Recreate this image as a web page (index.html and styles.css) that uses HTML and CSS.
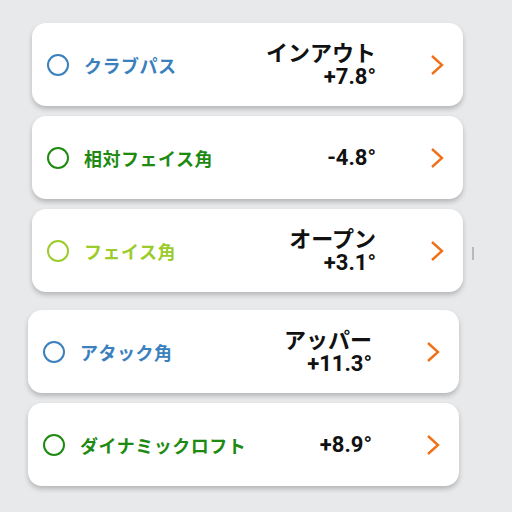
FILE: index.html
```html
<!DOCTYPE html>
<html lang="ja">
<head>
  <meta charset="UTF-8">
  <meta name="viewport" content="width=device-width, initial-scale=1.0">
  <title>スイング解析</title>
  <link rel="stylesheet" href="styles.css">
</head>
<body>

  <div class="group group-top">
    <div class="card">
      <span class="dot blue"></span>
      <span class="label blue">クラブパス</span>
      <div class="value">
        <div>インアウト</div>
        <div>+7.8°</div>
      </div>
      <svg class="chevron" viewBox="0 0 14 22"><path d="M2 2 L12 11 L2 20"/></svg>
    </div>
    <div class="card">
      <span class="dot green"></span>
      <span class="label green">相対フェイス角</span>
      <div class="value">
        <div>-4.8°</div>
      </div>
      <svg class="chevron" viewBox="0 0 14 22"><path d="M2 2 L12 11 L2 20"/></svg>
    </div>
    <div class="card">
      <span class="dot lime"></span>
      <span class="label lime">フェイス角</span>
      <div class="value">
        <div>オープン</div>
        <div>+3.1°</div>
      </div>
      <svg class="chevron" viewBox="0 0 14 22"><path d="M2 2 L12 11 L2 20"/></svg>
    </div>
    <span class="scroll-mark"></span>
  </div>

  <div class="group group-bottom">
    <div class="card">
      <span class="dot blue"></span>
      <span class="label blue">アタック角</span>
      <div class="value">
        <div>アッパー</div>
        <div>+11.3°</div>
      </div>
      <svg class="chevron" viewBox="0 0 14 22"><path d="M2 2 L12 11 L2 20"/></svg>
    </div>
    <div class="card">
      <span class="dot green"></span>
      <span class="label green">ダイナミックロフト</span>
      <div class="value">
        <div>+8.9°</div>
      </div>
      <svg class="chevron" viewBox="0 0 14 22"><path d="M2 2 L12 11 L2 20"/></svg>
    </div>
  </div>

</body>
</html>
```

FILE: styles.css
```css
body {
  margin: 0;
  padding: 23px 0 0;
  width: 512px;
  height: 512px;
  box-sizing: border-box;
  background: #e8e9eb;
  font-family: Roboto, "Noto Sans CJK JP", sans-serif;
  color: #111;
  overflow: hidden;
}

.group {
  display: flex;
  flex-direction: column;
  gap: 10px;
  width: 431px;
}

.group-top {
  position: relative;
  margin-left: 32px;
}

.group-bottom {
  margin-top: 18px;
  margin-left: 28px;
}

.card {
  display: flex;
  align-items: center;
  height: 83px;
  padding: 0 19px 0 15px;
  box-sizing: border-box;
  background: #fff;
  border-radius: 14px;
  box-shadow: 0 3px 5px rgba(0, 0, 0, 0.22);
}

.dot {
  width: 22px;
  height: 22px;
  box-sizing: border-box;
  border: 2px solid;
  border-radius: 50%;
  flex: none;
}

.label {
  margin-left: 15px;
  font-family: "Noto Sans CJK JP", sans-serif;
  font-size: 18px;
  font-weight: 700;
  letter-spacing: 0.5px;
}

.blue { color: #3a80bd; border-color: #3a80bd; }
.green { color: #1e8a12; border-color: #1e8a12; }
.lime { color: #9ccc2c; border-color: #9ccc2c; }

.value {
  margin-left: auto;
  margin-right: 54px;
  text-align: right;
  font-size: 22px;
  font-weight: 700;
  line-height: 23px;
}

.chevron {
  width: 14px;
  height: 22px;
  flex: none;
}

.chevron path {
  fill: none;
  stroke: #f07018;
  stroke-width: 2.4;
}

.scroll-mark {
  position: absolute;
  right: -11px;
  top: 224px;
  width: 2px;
  height: 13px;
  background: #b8b9bb;
}
```
